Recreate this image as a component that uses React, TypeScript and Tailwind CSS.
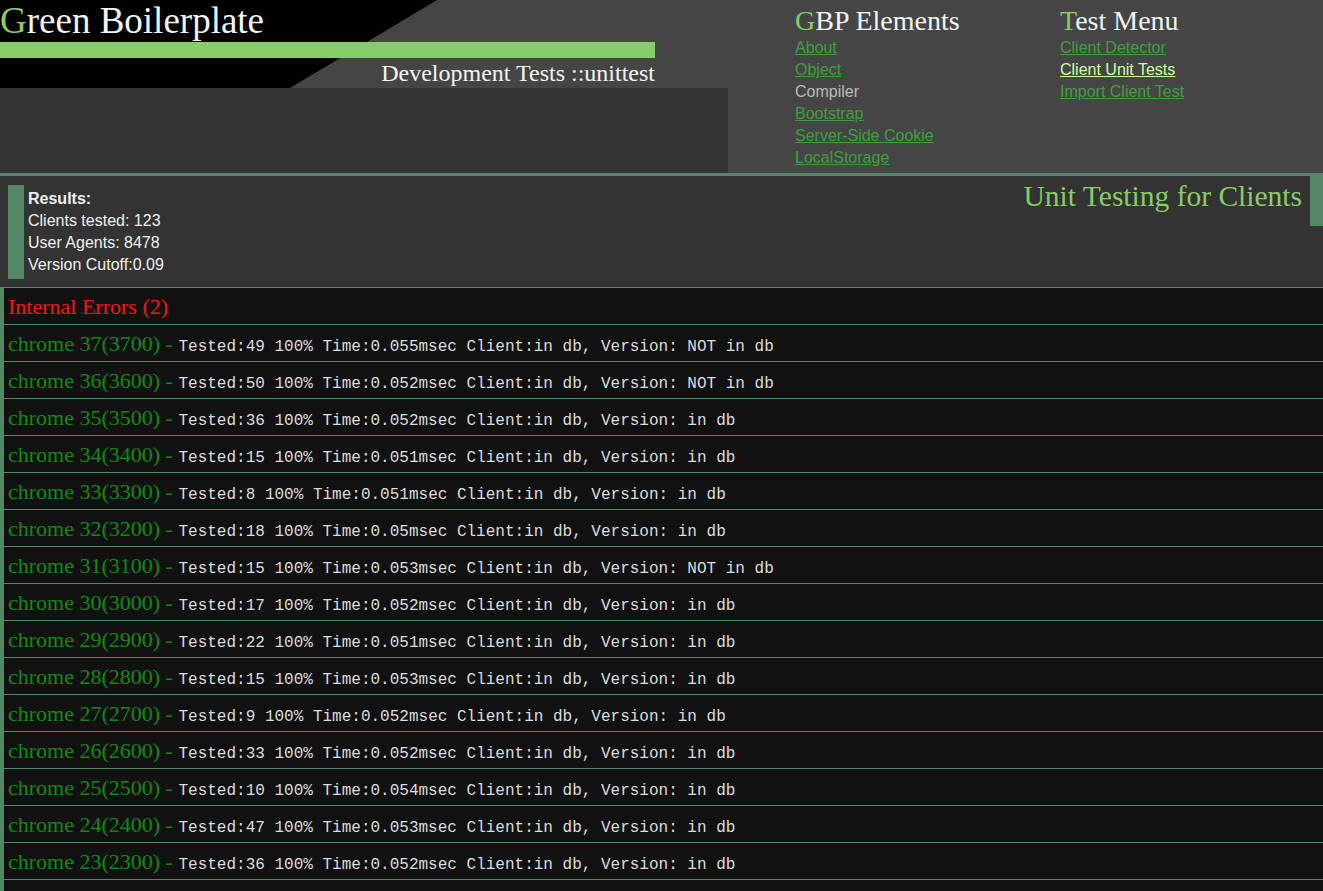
const ROWS = [
  { v: 37, n: 49, t: "0.055", known: false },
  { v: 36, n: 50, t: "0.052", known: false },
  { v: 35, n: 36, t: "0.052", known: true },
  { v: 34, n: 15, t: "0.051", known: true },
  { v: 33, n: 8, t: "0.051", known: true },
  { v: 32, n: 18, t: "0.05", known: true },
  { v: 31, n: 15, t: "0.053", known: false },
  { v: 30, n: 17, t: "0.052", known: true },
  { v: 29, n: 22, t: "0.051", known: true },
  { v: 28, n: 15, t: "0.053", known: true },
  { v: 27, n: 9, t: "0.052", known: true },
  { v: 26, n: 33, t: "0.052", known: true },
  { v: 25, n: 10, t: "0.054", known: true },
  { v: 24, n: 47, t: "0.053", known: true },
  { v: 23, n: 36, t: "0.052", known: true },
  { v: 22, n: 21, t: "0.052", known: true },
];

const serif = "font-['Liberation_Serif',serif]";
const sans = "font-['Liberation_Sans',Arial,sans-serif]";

function NavLink({ label, state }: { label: string; state?: "plain" | "active" }) {
  if (state === "plain") return <div className="text-[#bbbbbb]">{label}</div>;
  return (
    <div>
      <a href="#" className={state === "active" ? "text-[#ccff99] underline" : "text-[#3f9f3f] underline"}>
        {label}
      </a>
    </div>
  );
}

function Header() {
  return (
    <div className="flex bg-[#454545] border-b-[3px] border-[#558866]">
      <div className="w-[728px] shrink-0 flex flex-col">
        <div className="relative h-[88px]">
          <div className="absolute inset-0 bg-black [clip-path:polygon(0_0,437px_0,290px_88px,0_88px)]"></div>
          <div className="relative">
            <h1 className={`${serif} h-[42px] text-[37px] leading-[42px] text-[#f4f4f4]`}>
              <span className="text-[#88cc66]">G</span>reen Boilerplate
            </h1>
            <div className="h-[16px] w-[655px] bg-[#88cc66]"></div>
            <div className={`${serif} w-[655px] h-[30px] text-right text-[24px] leading-[30px] text-[#f4f4f4]`}>
              Development Tests ::unittest
            </div>
          </div>
        </div>
        <div className="h-[85px] bg-[#353535]"></div>
      </div>
      <div className={`flex pl-[67px] ${sans} text-[16px] leading-[22px]`}>
        <div className="w-[265px]">
          <h2 className={`${serif} text-[28px] leading-[32px] mt-[5px] text-[#f4f4f4]`}>
            <span className="text-[#88cc66]">G</span>BP Elements
          </h2>
          <NavLink label="About" />
          <NavLink label="Object" />
          <NavLink label="Compiler" state="plain" />
          <NavLink label="Bootstrap" />
          <NavLink label="Server-Side Cookie" />
          <NavLink label="LocalStorage" />
        </div>
        <div>
          <h2 className={`${serif} text-[28px] leading-[32px] mt-[5px] text-[#f4f4f4]`}>
            <span className="text-[#88cc66]">T</span>est Menu
          </h2>
          <NavLink label="Client Detector" />
          <NavLink label="Client Unit Tests" state="active" />
          <NavLink label="Import Client Test" />
        </div>
      </div>
    </div>
  );
}

function Results() {
  return (
    <div className="flex justify-between items-start bg-[#333333] h-[111px]">
      <div className={`ml-[8px] mt-[9px] border-l-[16px] border-[#558866] pl-[4px] py-[3px] ${sans} text-[16px] leading-[22px] text-[#f0f0f0]`}>
        <div className="font-bold">Results:</div>
        <div>Clients tested: 123</div>
        <div>User Agents: 8478</div>
        <div>Version Cutoff:0.09</div>
      </div>
      <div className={`h-[50px] border-r-[13px] border-[#558866] pr-[8px] pt-[2px] ${serif} text-[29.5px] leading-[36px] text-[#88cc66]`}>
        Unit Testing for Clients
      </div>
    </div>
  );
}

export default function App() {
  return (
    <div className="min-h-screen bg-[#111111] overflow-hidden">
      <Header />
      <Results />
      <div className="border-t border-l-4 border-[#558866] bg-[#111111]">
        <div className={`h-[37px] border-b border-[#558866] px-[4px] ${serif} text-[22px] leading-[37px] text-[#ff1111]`}>
          Internal Errors (2)
        </div>
        {ROWS.map((r) => (
          <div key={r.v} className="h-[37px] border-b border-[#558866] px-[4px] leading-[37px] whitespace-nowrap">
            <span className={`${serif} text-[22px] text-[#128a12]`}>
              chrome {r.v}({r.v * 100}) -{" "}
            </span>
            <span className="font-['Liberation_Mono',monospace] text-[16px] text-[#dddddd]">
              Tested:{r.n} 100% Time:{r.t}msec Client:in db, Version: {r.known ? "" : "NOT "}in db
            </span>
          </div>
        ))}
      </div>
    </div>
  );
}
